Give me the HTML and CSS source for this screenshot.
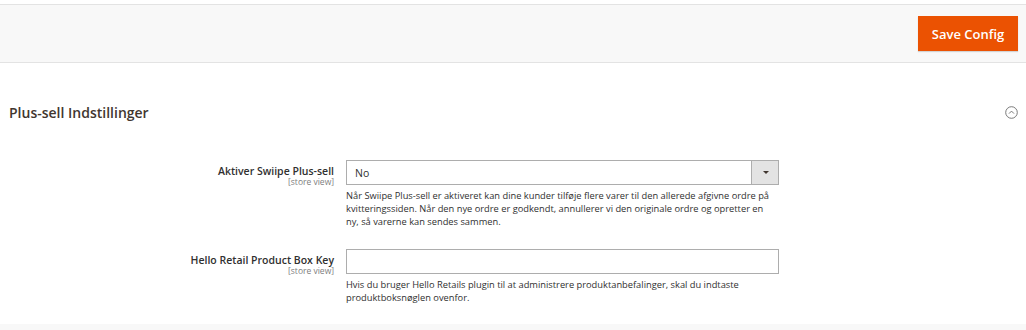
FILE: index.html
```html
<!DOCTYPE html>
<html lang="da">
<head>
    <meta charset="UTF-8">
    <title>Konfiguration</title>
    <link rel="stylesheet" href="styles.css">
</head>
<body>
    <div class="page-actions">
        <button class="save-btn">Save Config</button>
    </div>

    <div class="section">
        <div class="section-head">
            <h2>Plus-sell Indstillinger</h2>
            <svg class="collapse" width="13" height="13" viewBox="0 0 13 13">
                <circle cx="6.5" cy="6.5" r="5.8" fill="none" stroke="#6b6b6b" stroke-width="0.9"/>
                <path d="M4 7.6 L6.5 5.1 L9 7.6" fill="none" stroke="#6b6b6b" stroke-width="0.9"/>
            </svg>
        </div>

        <div class="fields">
            <div class="row">
                <div class="label">
                    <span>Aktiver Swiipe Plus-sell</span>
                    <span class="scope">[store view]</span>
                </div>
                <div class="value">
                    <div class="select">
                        <span>No</span>
                        <span class="arrow"></span>
                    </div>
                    <p class="note">Når Swiipe Plus-sell er aktiveret kan dine kunder tilføje flere varer til den allerede afgivne ordre på kvitteringssiden. Når den nye ordre er godkendt, annullerer vi den originale ordre og opretter en ny, så varerne kan sendes sammen.</p>
                </div>
            </div>
            <div class="row">
                <div class="label">
                    <span>Hello Retail Product Box Key</span>
                    <span class="scope">[store view]</span>
                </div>
                <div class="value">
                    <input type="text" class="text-input">
                    <p class="note">Hvis du bruger Hello Retails plugin til at administrere produktanbefalinger, skal du indtaste produktboksnøglen ovenfor.</p>
                </div>
            </div>
        </div>
    </div>
    <div class="page-bottom"></div>
</body>
</html>
```

FILE: styles.css
```css
body {
    font-family: "Open Sans", Arial, sans-serif;
    margin: 0;
    padding: 0;
    background: #fff;
    color: #303030;
}
.page-actions {
    margin-top: 4px;
    height: 57px;
    background: #f8f8f8;
    border-top: 1px solid #e3e3e3;
    border-bottom: 1px solid #e3e3e3;
    display: flex;
    justify-content: flex-end;
    align-items: center;
    padding-right: 8px;
}
.save-btn {
    background: #eb5202;
    color: #fff;
    border: none;
    font-family: inherit;
    font-weight: 600;
    font-size: 13px;
    width: 100px;
    height: 35px;
    padding: 0;
    box-shadow: 0 1px 1px rgba(0, 0, 0, 0.15);
}
.section {
    height: 261px;
    background: #fff;
}
.section-head {
    display: flex;
    justify-content: space-between;
    align-items: center;
    padding: 40px 8px 0 9px;
}
.section-head h2 {
    margin: 0;
    font-size: 14px;
    font-weight: 600;
    color: #41362f;
}
.fields {
    margin-top: 38px;
    display: flex;
    flex-direction: column;
    gap: 21px;
}
.row {
    display: grid;
    grid-template-columns: 334px 433px;
    column-gap: 12px;
}
.label {
    display: flex;
    flex-direction: column;
    align-items: flex-end;
    padding-top: 5px;
    font-size: 10.5px;
    font-weight: 600;
    line-height: 12px;
}
.label .scope {
    font-size: 8.5px;
    font-weight: 400;
    color: #808080;
    line-height: 10px;
}
.select {
    height: 23px;
    border: 1px solid #adadad;
    display: flex;
    align-items: center;
    justify-content: space-between;
    font-size: 10.5px;
    padding-left: 8px;
}
.select .arrow {
    width: 26px;
    height: 100%;
    background: #e3e3e3;
    border-left: 1px solid #adadad;
    position: relative;
}
.select .arrow::after {
    content: "";
    position: absolute;
    left: 11px;
    top: 10px;
    border-left: 3px solid transparent;
    border-right: 3px solid transparent;
    border-top: 3px solid #41362f;
}
.text-input {
    display: block;
    box-sizing: border-box;
    width: 100%;
    height: 25px;
    margin: 0;
    border: 1px solid #adadad;
}
.note {
    margin: 4px 0 0;
    max-width: 427px;
    font-size: 9.3px;
    line-height: 13px;
    color: #303030;
}
.page-bottom {
    height: 10px;
    background: #f8f8f8;
}
```
